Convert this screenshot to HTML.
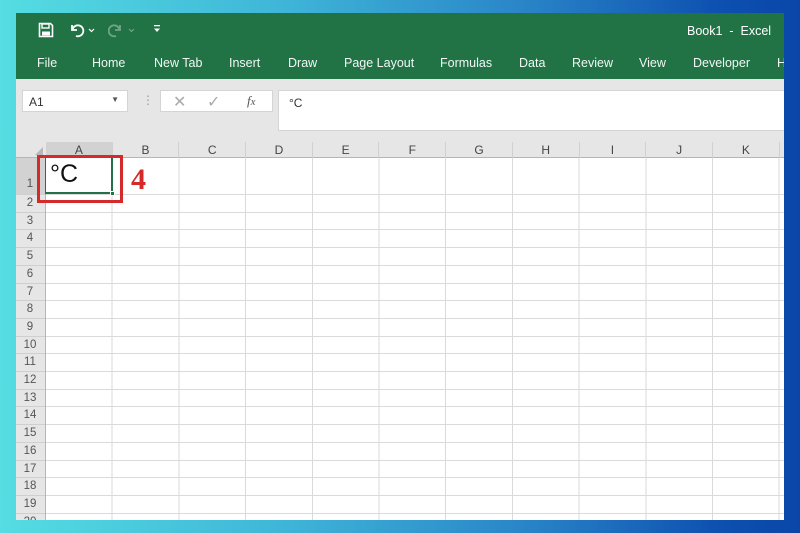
<!DOCTYPE html>
<html><head><meta charset="utf-8"><style>
*{margin:0;padding:0;box-sizing:border-box}
body{width:800px;height:533px;overflow:hidden;position:relative;font-family:"Liberation Sans",sans-serif;
background:linear-gradient(90deg,#55dde2 0%,#3fb6d8 35%,#2a86c8 65%,#0d50b0 90%,#0a46a8 100%)}
.abs{position:absolute}
#win{left:16px;top:13px;width:768px;height:507px;background:#fff;overflow:hidden}
#green{left:0;top:0;width:768px;height:66px;background:#217346;color:#fff}
.tab{position:absolute;top:43px;font-size:12.5px;color:#f2f7f4}
#gray{left:0;top:66px;width:768px;height:63px;background:#e6e6e6}
.box{position:absolute;background:#fff;border:1px solid #d4d4d4}
#colh{left:0;top:129px;width:768px;height:16px;background:#e6e6e6;border-bottom:1px solid #b5b5b5}
.ch{position:absolute;top:0;height:16px;width:66.7px;text-align:center;font-size:12px;color:#444;line-height:16px;border-right:1px solid #d0d0d0}
#rowh{left:0;top:145px;width:30px;height:362px;background:#e6e6e6;border-right:1px solid #b5b5b5}
.rn{position:absolute;left:0;width:28px;font-size:11.5px;color:#555;text-align:center}
#grid{left:30px;top:145px;width:738px;height:362px;
background-image:repeating-linear-gradient(90deg,transparent 0,transparent 65.7px,#dadada 65.7px,#dadada 66.7px);}
.hl{position:absolute;left:0;width:768px;height:1px;background:#dadada}
</style></head><body>
<div id="win" class="abs">
 <div id="green" class="abs">
  <svg class="abs" style="left:22px;top:9px" width="16" height="16" viewBox="0 0 16 16"><path d="M1.5 1.5h11l2 2v11h-13z" fill="none" stroke="#fff" stroke-width="1.6"/><rect x="4" y="2" width="7" height="4" fill="none" stroke="#fff" stroke-width="1.4"/><rect x="4" y="9.5" width="8" height="4" fill="#fff"/></svg>
  <svg class="abs" style="left:52px;top:9px" width="30" height="16" viewBox="0 0 30 16"><path d="M4 3v5h5" fill="none" stroke="#fff" stroke-width="1.8"/><path d="M4.5 7.5A5.5 5.5 0 1 1 8 14" fill="none" stroke="#fff" stroke-width="1.8"/><path d="M21 7l2.5 2.5L26 7" fill="none" stroke="#fff" stroke-width="1.2"/></svg>
  <svg class="abs" style="left:92px;top:9px" width="30" height="16" viewBox="0 0 30 16" opacity=".35"><path d="M12 3v5H7" fill="none" stroke="#fff" stroke-width="1.8"/><path d="M11.5 7.5A5.5 5.5 0 1 0 8 14" fill="none" stroke="#fff" stroke-width="1.8"/><path d="M21 7l2.5 2.5L26 7" fill="none" stroke="#fff" stroke-width="1.2"/></svg>
  <svg class="abs" style="left:137px;top:11px" width="8" height="10" viewBox="0 0 8 10"><rect x="1" y="1" width="6" height="1.3" fill="#fff"/><path d="M1 4.5h6L4 8z" fill="#fff"/></svg>
  <div class="abs" style="left:671px;top:11px;font-size:12.5px">Book1&nbsp; - &nbsp;Excel</div>
  <div class="tab" style="left:21px">File</div>
  <div class="tab" style="left:76px">Home</div>
  <div class="tab" style="left:138px">New Tab</div>
  <div class="tab" style="left:213px">Insert</div>
  <div class="tab" style="left:272px">Draw</div>
  <div class="tab" style="left:328px">Page Layout</div>
  <div class="tab" style="left:424px">Formulas</div>
  <div class="tab" style="left:503px">Data</div>
  <div class="tab" style="left:556px">Review</div>
  <div class="tab" style="left:623px">View</div>
  <div class="tab" style="left:677px">Developer</div>
  <div class="tab" style="left:761px">H</div>
 </div>
 <div id="gray" class="abs">
  <div class="box" style="left:6px;top:11px;width:106px;height:22px;font-size:12px;color:#333;padding:4px 6px">A1<span style="position:absolute;right:8px;top:4px;font-size:8px;color:#555">▼</span></div>
  <div class="abs" style="left:126px;top:14px;color:#999;font-size:12px">⋮</div>
  <div class="box" style="left:144px;top:11px;width:113px;height:22px;color:#aaa">
   <span class="abs" style="left:12px;top:1px;font-size:16px">✕</span>
   <span class="abs" style="left:46px;top:1px;font-size:16px">✓</span>
   <span class="abs" style="left:86px;top:2px;font-size:13px;font-style:italic;font-family:'Liberation Serif',serif;color:#555">f<small>x</small></span>
  </div>
  <div class="box" style="left:262px;top:11px;width:510px;height:41px;font-size:12px;color:#333;padding:5px 10px">°C</div>
 </div>
 <div id="colh" class="abs">
  <div class="abs" style="left:19px;top:5px;width:0;height:0;border-left:8px solid transparent;border-bottom:8px solid #b8b8b8"></div>
  <div class="ch" style="left:30px;background:#d2d2d2;border-bottom:2px solid #217346">A</div>
  <div class="ch" style="left:96.7px">B</div><div class="ch" style="left:163.4px">C</div><div class="ch" style="left:230.1px">D</div><div class="ch" style="left:296.8px">E</div><div class="ch" style="left:363.5px">F</div><div class="ch" style="left:430.2px">G</div><div class="ch" style="left:496.9px">H</div><div class="ch" style="left:563.6px">I</div><div class="ch" style="left:630.3px">J</div><div class="ch" style="left:697px">K</div>
 </div>
 <div id="grid" class="abs">
  <div class="hl" style="top:36px"></div>
 </div>
 <div id="rowh" class="abs"><div class="abs" style="left:0;top:0;width:29px;height:36px;background:#d2d2d2"></div></div>
 <script>
  var g=document.getElementById('grid'),r=document.getElementById('rowh');
  var s='';var rs='<div class="rn" style="top:20px">1</div>';
  for(var i=2;i<=20;i++){var t=36+(i-2)*17.7;s+='<div class="hl" style="top:'+(t+17.7).toFixed(1)+'px"></div>';
   rs+='<div class="rn" style="top:'+(t+3).toFixed(1)+'px">'+i+'</div>';
   rs+='<div class="abs" style="left:0;width:29px;height:1px;background:#cfcfcf;top:'+(t+17.7).toFixed(1)+'px"></div>';}
  rs+='<div class="abs" style="left:0;width:29px;height:1px;background:#cfcfcf;top:36px"></div>';
  g.innerHTML+=s;r.innerHTML+=rs;
 </script>
 <div class="abs" style="left:29px;top:144px;width:68px;height:37px;border:2px solid #217346;border-top:none;border-left:1px solid #217346"></div>
 <div class="abs" style="left:94px;top:178px;width:5px;height:5px;background:#217346;border:1px solid #fff"></div>
 <div class="abs" style="left:34px;top:147px;font-size:25px;color:#111">°C</div>
</div>
<div class="abs" style="left:37px;top:155px;width:86px;height:48px;border:3px solid #d42a2a"></div>
<div class="abs" style="left:131px;top:163px;font-size:30px;font-weight:bold;color:#d42a2a;font-family:'Liberation Serif',serif">4</div>
</body></html>
